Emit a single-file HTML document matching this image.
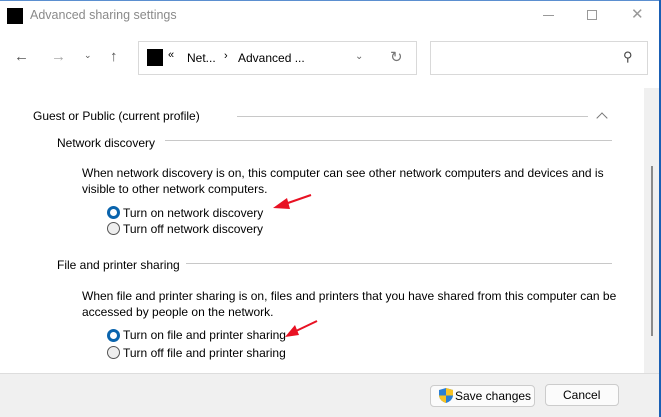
<!DOCTYPE html>
<html><head><style>
*{margin:0;padding:0;box-sizing:border-box}
body{width:661px;height:417px;overflow:hidden;background:#fff;font-family:"Liberation Sans",sans-serif;font-size:12px;color:#000;position:relative}
.a{position:absolute}
.t{white-space:nowrap}
.line{position:absolute;height:1px;background:#c8c8c8}
.radio{position:absolute;width:13px;height:13px;border-radius:50%}
</style></head><body>
<div class="a" style="left:659px;top:0;width:2px;height:417px;background:#1a5fb4"></div>
<div class="a" style="left:0;top:0;width:659px;height:1px;background:#5b8fd0"></div>
<div class="a" style="left:7px;top:8px;width:16px;height:16px;background:#000"></div>
<div class="a t" style="left:30px;top:8px;color:#8a8a8a;font-size:12.5px">Advanced sharing settings</div>
<div class="a" style="left:543px;top:15px;width:11px;height:1px;background:#999"></div>
<div class="a" style="left:587px;top:10px;width:10px;height:10px;border:1px solid #999"></div>
<div class="a t" style="left:631px;top:5px;color:#999;font-size:15px">✕</div>
<div class="a t" style="left:14px;top:48px;color:#555;font-size:15px">←</div>
<div class="a t" style="left:51px;top:48px;color:#aaa;font-size:15px">→</div>
<div class="a t" style="left:84px;top:50px;color:#555;font-size:9px">⌄</div>
<div class="a t" style="left:110px;top:48px;color:#555;font-size:15px">↑</div>
<div class="a" style="left:138px;top:41px;width:279px;height:34px;border:1px solid #d9d9d9"></div>
<div class="a" style="left:147px;top:49px;width:16px;height:17px;background:#000"></div>
<div class="a t" style="left:168px;top:49px;font-size:11px">«</div>
<div class="a t" style="left:187px;top:51px">Net...</div>
<div class="a t" style="left:224px;top:50px;font-size:11px">›</div>
<div class="a t" style="left:238px;top:51px">Advanced ...</div>
<div class="a t" style="left:355px;top:51px;color:#666;font-size:10px">⌄</div>
<div class="a t" style="left:390px;top:48px;color:#777;font-size:15px">↻</div>
<div class="a" style="left:430px;top:41px;width:218px;height:34px;border:1px solid #d9d9d9"></div>
<div class="a t" style="left:623px;top:49px;color:#444;font-size:13px">⚲</div>
<div class="a" style="left:644px;top:88px;width:15px;height:285px;background:#f0f0f0"></div>
<div class="a" style="left:651px;top:166px;width:2px;height:170px;background:#8a8a8a"></div>
<div class="a t" style="left:33px;top:109px">Guest or Public (current profile)</div>
<div class="line" style="left:237px;top:116px;width:351px"></div>
<div class="a" style="left:598px;top:114px;width:8px;height:8px;border-left:1px solid #777;border-top:1px solid #777;transform:rotate(45deg)"></div>
<div class="a t" style="left:57px;top:136px">Network discovery</div>
<div class="line" style="left:165px;top:140px;width:447px"></div>
<div class="a" style="left:82px;top:165px;line-height:16px;width:540px">When network discovery is on, this computer can see other network computers and devices and is visible to other network computers.</div>
<div class="radio" style="left:107px;top:206px;border:3px solid #0a64ad;background:#fff"></div>
<div class="a t" style="left:123px;top:206px">Turn on network discovery</div>
<div class="radio" style="left:107px;top:222px;border:1px solid #555;background:#eee"></div>
<div class="a t" style="left:123px;top:222px">Turn off network discovery</div>
<div class="a t" style="left:57px;top:258px">File and printer sharing</div>
<div class="line" style="left:186px;top:263px;width:426px"></div>
<div class="a" style="left:82px;top:288px;line-height:16px;width:540px">When file and printer sharing is on, files and printers that you have shared from this computer can be accessed by people on the network.</div>
<div class="radio" style="left:107px;top:329px;border:3px solid #0a64ad;background:#fff"></div>
<div class="a t" style="left:123px;top:328px">Turn on file and printer sharing</div>
<div class="radio" style="left:107px;top:346px;border:1px solid #555;background:#eee"></div>
<div class="a t" style="left:123px;top:346px">Turn off file and printer sharing</div>
<svg class="a" style="left:0;top:0" width="661" height="417">
<line x1="311" y1="195" x2="285" y2="204" stroke="#e81123" stroke-width="2"/>
<polygon points="273,208 287,198 290,209" fill="#e81123"/>
<line x1="317" y1="321" x2="296" y2="331" stroke="#e81123" stroke-width="2"/>
<polygon points="285,337 295,325 299,335" fill="#e81123"/>
</svg>
<div class="a" style="left:0;top:373px;width:659px;height:44px;background:#f0f0f0;border-top:1px solid #ddd"></div>
<div class="a" style="left:430px;top:385px;width:105px;height:22px;border:1px solid #ccc;border-radius:4px;background:#fbfbfb"></div>
<svg class="a" style="left:439px;top:388px" width="14" height="15"><path d="M7 0 L14 2 L14 8 Q13 13 7 15 Q1 13 0 8 L0 2 Z" fill="#2a7fd4"/><path d="M7 0 L14 2 L14 7.5 L7 7.5 Z M0 7.5 L7 7.5 L7 15 Q1 13 0 8 Z" fill="#f7c325"/></svg>
<div class="a t" style="left:455px;top:389px">Save changes</div>
<div class="a" style="left:545px;top:384px;width:74px;height:22px;border:1px solid #ccc;border-radius:4px;background:#fbfbfb"></div>
<div class="a t" style="left:563px;top:388px">Cancel</div>
</body></html>
